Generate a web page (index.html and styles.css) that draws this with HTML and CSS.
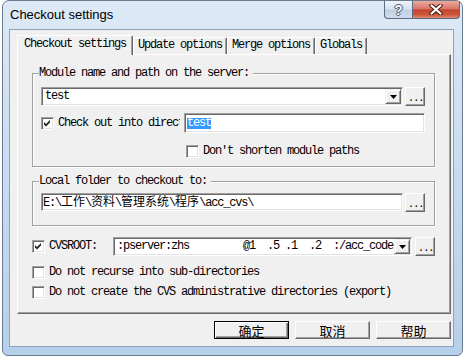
FILE: index.html
```html
<!DOCTYPE html>
<html lang="zh-CN">
<head>
    <meta charset="UTF-8">
    <title>Checkout settings</title>
    <link rel="stylesheet" href="styles.css">
</head>
<body>
    <div class="window">
        <div class="titlebar">
            <span class="title">Checkout settings</span>
            <div class="caption-buttons">
                <span class="cap-btn help">?</span>
                <span class="cap-btn close">
                    <svg width="14" height="11" viewBox="0 0 14 11">
                        <path d="M2.5 1.5L11.5 9.5M11.5 1.5L2.5 9.5" stroke="#4a1a12" stroke-width="4.2" stroke-linecap="round"/>
                        <path d="M2.5 1.5L11.5 9.5M11.5 1.5L2.5 9.5" stroke="#ffffff" stroke-width="2.2" stroke-linecap="round"/>
                    </svg>
                </span>
            </div>
        </div>

        <div class="client">
            <!-- タブ -->
            <div class="tabs">
                <div class="tab active">Checkout settings</div>
                <div class="tab">Update options</div>
                <div class="tab">Merge options</div>
                <div class="tab">Globals</div>
            </div>

            <div class="panel">
                <!-- モジュール -->
                <div class="group">
                    <div class="group-title">Module name and path on the server:</div>
                    <div class="row row-module">
                        <div class="combo sunken">
                            <span class="field-text">test</span>
                            <span class="drop">
                                <svg width="7" height="4" viewBox="0 0 7 4"><polygon points="0,0 7,0 3.5,4" fill="#000"/></svg>
                            </span>
                        </div>
                        <span class="more">...</span>
                    </div>
                    <div class="row row-dir">
                        <span class="check checked">
                            <svg width="7" height="7" viewBox="0 0 7 7"><path d="M0 2L2 4L6 0V2.6L2 6.6L0 4.6Z" fill="#222"/></svg>
                        </span>
                        <span class="label clip">Check out into directory:</span>
                        <div class="edit sunken dir-edit"><span class="sel">test</span></div>
                    </div>
                    <div class="row row-short">
                        <span class="check"></span>
                        <span class="label">Don't shorten module paths</span>
                    </div>
                </div>

                <!-- ローカルフォルダ -->
                <div class="group group-local">
                    <div class="group-title">Local folder to checkout to:</div>
                    <div class="row row-local">
                        <div class="edit sunken local-edit">
                            <span class="field-text">E:\<span class="cjk">工作</span>\<span class="cjk">资料</span>\<span class="cjk">管理系统</span>\<span class="cjk">程序</span>\acc_cvs\</span>
                        </div>
                        <span class="more">...</span>
                    </div>
                </div>

                <div class="row row-cvs">
                    <span class="check checked">
                        <svg width="7" height="7" viewBox="0 0 7 7"><path d="M0 2L2 4L6 0V2.6L2 6.6L0 4.6Z" fill="#222"/></svg>
                    </span>
                    <span class="label cvs-label">CVSROOT:</span>
                    <div class="combo sunken">
                        <span class="field-text pre">:pserver:zhs         @1  .5 .1  .2  :/acc_code</span>
                        <span class="drop">
                            <svg width="7" height="4" viewBox="0 0 7 4"><polygon points="0,0 7,0 3.5,4" fill="#000"/></svg>
                        </span>
                    </div>
                    <span class="more">...</span>
                </div>

                <div class="row row-recurse">
                    <span class="check"></span>
                    <span class="label">Do not recurse into sub-directories</span>
                </div>

                <div class="row row-export">
                    <span class="check"></span>
                    <span class="label">Do not create the CVS administrative directories (export)</span>
                </div>
            </div>

            <div class="buttons">
                <span class="btn default">确定</span>
                <span class="btn">取消</span>
                <span class="btn">帮助</span>
            </div>
        </div>
    </div>
</body>
</html>
```

FILE: styles.css
```css
* {
    margin: 0;
    padding: 0;
    box-sizing: border-box;
}

body {
    background-color: #ffffff;
    font-family: 'Liberation Mono', 'Noto Sans CJK SC', monospace;
    font-size: 12px;
    letter-spacing: -1.2px;
    color: #000000;
}

.window {
    width: 461px;
    height: 356px;
    margin-left: 2px;
    border: 1px solid #6b7b8e;
    border-radius: 7px 7px 6px 6px;
    background: linear-gradient(to bottom, #dde9f6 0%, #c9dcf1 45%, #b6cfeb 100%);
    padding: 0 8px 8px 6px;
    display: flex;
    flex-direction: column;
}

/* タイトルバー */
.titlebar {
    height: 28px;
    display: flex;
    align-items: flex-start;
    flex-shrink: 0;
}

.title {
    font-family: 'Liberation Sans', sans-serif;
    font-size: 13px;
    letter-spacing: 0;
    line-height: 16px;
    padding: 6px 0 0 1px;
    color: #000000;
}

.caption-buttons {
    margin-left: auto;
    margin-right: -6px;
    display: flex;
}

.cap-btn {
    height: 18px;
    display: flex;
    align-items: center;
    justify-content: center;
    border: 1px solid #5b6b80;
    border-top: none;
}

.cap-btn.help {
    width: 28px;
    border-right: none;
    border-radius: 0 0 0 4px;
    background: linear-gradient(to bottom, #eef3f9 0%, #d7e2ee 48%, #bfcfe2 52%, #cfdcec 100%);
    font-family: 'Liberation Sans', sans-serif;
    font-weight: bold;
    font-size: 14px;
    letter-spacing: 0;
    color: #f4f7fb;
    text-shadow: 0 0 1px #2c3a4c, 1px 0 0 #56657a, -1px 0 0 #56657a, 0 1px 0 #56657a, 0 -1px 0 #56657a;
}

.cap-btn.close {
    width: 48px;
    border-radius: 0 0 4px 0;
    background: linear-gradient(to bottom, #e8a99c 0%, #d8786a 45%, #c6452f 52%, #cc5438 80%, #e08a6e 100%);
}

/* クライアント領域 */
.client {
    flex: 1;
    border: 1px solid #8ea3bb;
    background-color: #f0f0f0;
    padding: 5px 2px 0 7px;
    display: flex;
    flex-direction: column;
}

.tabs {
    display: flex;
    align-items: flex-end;
    height: 19px;
    position: relative;
    z-index: 1;
}

.tab {
    height: 17px;
    padding: 0 4px;
    line-height: 15px;
    border: 1px solid;
    border-color: #ffffff #696969 transparent #ffffff;
    border-bottom: none;
    border-radius: 2px 2px 0 0;
    box-shadow: inset -1px 0 0 #a0a0a0;
    white-space: nowrap;
}

.tab.active {
    height: 20px;
    padding: 1px 6px 0;
    margin-bottom: -1px;
    background-color: #f0f0f0;
}

.panel {
    height: 260px;
    border: 1px solid;
    border-color: #ffffff #696969 #696969 #ffffff;
    box-shadow: inset -1px -1px 0 #a0a0a0;
    padding: 18px 15px 0 14px;
}

/* グループボックス */
.group {
    border: 1px solid #a0a0a0;
    box-shadow: inset 1px 1px 0 #ffffff, 1px 1px 0 #ffffff;
    padding: 0 9px 8px 8px;
}

.group-title {
    margin: -7px 0 0 -2px;
    padding: 0 4px 0 0;
    width: max-content;
    line-height: 13px;
    height: 13px;
    background-color: #f0f0f0;
    white-space: nowrap;
}

.group-local {
    margin-top: 14px;
    padding-bottom: 13px;
}

.row {
    display: flex;
    align-items: center;
}

.label {
    line-height: 13px;
    white-space: nowrap;
}

.clip {
    width: 122px;
    overflow: hidden;
}

.row-module {
    margin-top: 7px;
    gap: 2px;
}

.row-dir {
    margin-top: 7px;
    height: 20px;
}

.row-dir .check {
    margin-right: 4px;
}

.row-short {
    margin-top: 12px;
    padding-left: 145px;
    height: 13px;
}

.row-short .check,
.row-recurse .check,
.row-export .check {
    margin-right: 4px;
}

.row-local {
    margin-top: 5px;
    gap: 2px;
    align-items: flex-start;
}

.row-cvs {
    margin-top: 11px;
    height: 19px;
}

.row-cvs .check {
    margin-right: 4px;
}

.cvs-label {
    width: 64px;
}

.row-cvs .more {
    margin-left: 3px;
}

.row-recurse {
    margin-top: 10px;
    height: 13px;
}

.row-export {
    margin-top: 7px;
    height: 13px;
}

/* コントロール */
.sunken {
    border: 1px solid;
    border-color: #a0a0a0 #ffffff #ffffff #a0a0a0;
    box-shadow: inset 1px 1px 0 #696969, inset -1px -1px 0 #e3e3e3;
    background-color: #ffffff;
}

.combo {
    flex: 1;
    height: 19px;
    padding: 1px;
    display: flex;
    align-items: center;
    overflow: hidden;
}

.field-text {
    flex: 1;
    padding-left: 2px;
    line-height: 13px;
    white-space: nowrap;
    overflow: hidden;
}

.pre {
    white-space: pre;
}

.cjk {
    font-family: 'Noto Sans CJK SC', sans-serif;
    letter-spacing: 0;
}

.drop {
    width: 16px;
    height: 15px;
    flex-shrink: 0;
    display: flex;
    align-items: center;
    justify-content: center;
    background-color: #f0f0f0;
    border: 1px solid;
    border-color: #f0f0f0 #696969 #696969 #f0f0f0;
    box-shadow: inset 1px 1px 0 #ffffff, inset -1px -1px 0 #a0a0a0;
}

.more {
    width: 20px;
    height: 19px;
    flex-shrink: 0;
    display: flex;
    align-items: center;
    justify-content: center;
    line-height: 13px;
    padding-top: 3px;
    padding-left: 1px;
    background-color: #f0f0f0;
    border: 1px solid;
    border-color: #ffffff #696969 #696969 #ffffff;
    box-shadow: inset -1px -1px 0 #a0a0a0;
    font-size: 11px;
    letter-spacing: -1.5px;
}

.edit {
    flex: 1;
    padding: 1px;
    display: flex;
    align-items: center;
}

.dir-edit {
    height: 20px;
    margin-left: 4px;
    padding-left: 2px;
}

.local-edit {
    height: 18px;
    overflow: hidden;
}

.local-edit .field-text {
    padding-left: 0;
    line-height: 16px;
}

.sel {
    background-color: #3399ff;
    color: #ffffff;
    line-height: 11px;
}

.check {
    width: 13px;
    height: 13px;
    flex-shrink: 0;
    display: flex;
    align-items: center;
    justify-content: center;
    background-color: #ffffff;
    border: 1px solid;
    border-color: #a0a0a0 #ffffff #ffffff #a0a0a0;
    box-shadow: inset 1px 1px 0 #696969, inset -1px -1px 0 #e3e3e3;
}

/* ボタン */
.buttons {
    margin-top: 7px;
    display: flex;
    justify-content: flex-end;
    gap: 6px;
}

.btn {
    width: 75px;
    height: 18px;
    display: flex;
    align-items: center;
    justify-content: center;
    font-family: 'Noto Sans CJK SC', sans-serif;
    font-size: 13px;
    letter-spacing: 0;
    background-color: #f0f0f0;
    border: 1px solid;
    border-color: #ffffff #696969 #696969 #ffffff;
    box-shadow: inset -1px -1px 0 #a0a0a0;
}

.btn.default {
    border: 1px solid #000000;
    box-shadow: inset 1px 1px 0 #ffffff, inset -1px -1px 0 #696969, inset -2px -2px 0 #a0a0a0;
}
```
